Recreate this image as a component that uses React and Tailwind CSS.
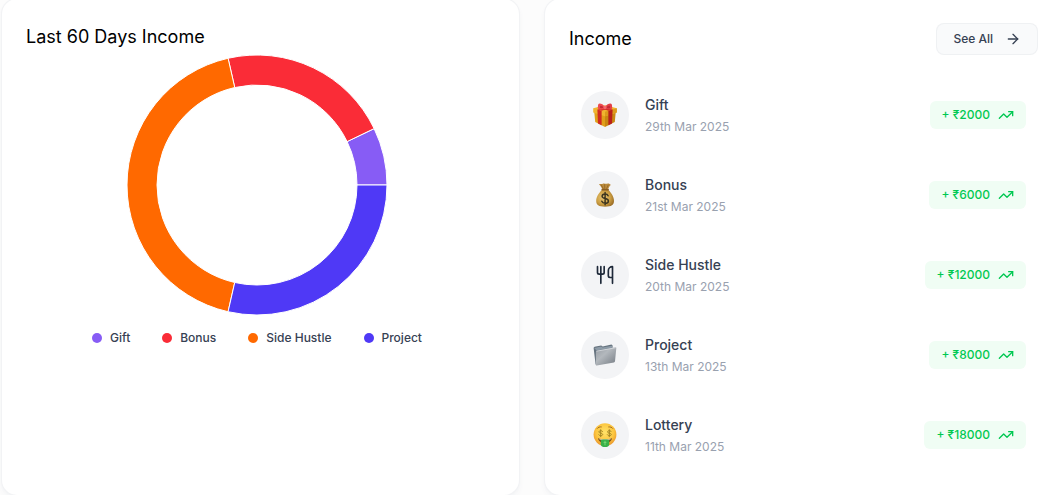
import React from "react";
import { ArrowRight, TrendingUp, Utensils } from "lucide-react";

const SLICES = [
  { name: "Gift", amount: 2000, color: "#875cf5" },
  { name: "Bonus", amount: 6000, color: "#fa2c37" },
  { name: "Side Hustle", amount: 12000, color: "#ff6900" },
  { name: "Project", amount: 8000, color: "#4f39f6" },
];

function GiftIcon() {
  return (
    <svg viewBox="0 0 24 24" className="size-6" aria-hidden="true">
      <path d="M1.200 8.500 12 12v12L2.200 19Z" fill="#e0a01a" />
      <path d="M12 12l10.800-3.500L21.800 19 12 24Z" fill="#c98712" />
      <path d="M.2 5.200 12 2.200l11.800 3v4.400L12 13.200.2 9.600Z" fill="#f0b530" />
      <path d="M12 8.800l11.800-3.600v4.400L12 13.200Z" fill="#dc9a1c" />
      <path d="M4.400 6.500 8.600 7.800v14.500l-3.600-1.900Z" fill="#cf2a22" />
      <path d="m15.400 7.800 4.200-1.300-.6 13.900-3.600 1.900Z" fill="#b8201c" />
      <path d="M4.400 6.500 14.500 3.300l5 1L8.600 7.800Z" fill="#dd362c" />
      <path d="M19.600 6.500 9.500 3.300l-5 1 10.900 3.500Z" fill="#d32d27" />
      <path d="M12 4C9.700.400 6-.200 5.300 1.200c-.6 1.600-.5 4.200.2 4.900 1.300.7 4.600.1 6.500-1.100Z" fill="#ee4a4e" />
      <path d="M12 4c2.300-3.600 6-4.200 6.700-2.800.6 1.600.5 4.200-.2 4.900-1.300.7-4.600.1-6.500-1.100Z" fill="#e33f44" />
      <path d="M7.200 2.700c1.400 0 2.800.7 3.600 1.800-1.300.6-2.700.8-3.800.5Zm9.600 0c-1.400 0-2.800.7-3.600 1.800 1.300.6 2.700.8 3.800.5Z" fill="#c42a34" />
      <rect x="10.500" y="2.700" width="3" height="3.400" rx="1" fill="#f4686c" />
    </svg>
  );
}

function MoneyBagIcon() {
  return (
    <svg viewBox="0 0 24 24" className="size-6" aria-hidden="true">
      <defs>
        <radialGradient id="bag" cx=".4" cy=".45" r=".65">
          <stop offset="0" stopColor="#e6c576" />
          <stop offset=".6" stopColor="#cda044" />
          <stop offset="1" stopColor="#9b6d26" />
        </radialGradient>
      </defs>
      <path d="M6 1.300C7.200.3 8.400 1.500 9.800.8c1.400-.8 2.900.5 4.400-.1 1.300-.5 2.800.3 3.500 1.200-1.500 1.300-2.300 3-2.500 4.800H9.200C8.800 4.500 7.500 2.900 6 1.300Z" fill="#bb8b3c" />
      <path d="M8.200 1.800 10.400 6M11.600 1.300l.2 4.700M15.300 1.800 13.500 6" stroke="#8b5e22" strokeWidth=".7" />
      <path d="M8.900 7h6.500c2.700 2.600 5.600 6.600 5.600 10.800 0 4.400-2.500 5.900-8.900 5.900s-8.900-1.500-8.900-5.900C3.200 13.600 6.200 9.600 8.900 7Z" fill="url(#bag)" />
      <rect x="8.300" y="6" width="7.700" height="1.600" rx=".8" fill="#8a5e22" />
      <path d="M15.100 12.700c-.5-1.200-1.600-1.700-3-1.700-1.800 0-3 .9-3 2.300 0 3.200 6.300 1.400 6.300 4.600 0 1.500-1.400 2.400-3.200 2.400-1.700 0-2.900-.7-3.400-2M12.100 9.500v12.300" fill="none" stroke="#3d3620" strokeWidth="1.500" strokeLinecap="round" />
    </svg>
  );
}

function FolderIcon() {
  return (
    <svg viewBox="0 0 24 24" className="size-6" aria-hidden="true">
      <defs>
        <linearGradient id="folder" x1="0" y1="0" x2="1" y2="1">
          <stop offset="0" stopColor="#979da4" />
          <stop offset=".4" stopColor="#b3b8bd" />
          <stop offset="1" stopColor="#747b83" />
        </linearGradient>
      </defs>
      <path d="M.6 4.800 1.600 3.800l6.600-1.300 1.500.9L18.500 1.600l1.100.9v15L2.600 21.500Z" fill="#65727e" />
      <path d="M1.200 5 8.200 3.600l1.500.9 9.300-1.800v2L3.500 7.600Z" fill="#8d9ba7" />
      <path d="M3.800 7.700 22.300 4.300c.7-.1 1.100.3 1 .9L22 18.300c-.1.600-.5 1-1.100 1.100L3.800 22.600c-.6.100-1-.3-1-.9l.1-12.800c0-.6.300-1.100.9-1.200Z" fill="url(#folder)" />
      <path d="M3.400 8.200 22.700 4.700" stroke="#dfe3e6" strokeWidth=".7" />
    </svg>
  );
}

function MoneyFaceIcon() {
  return (
    <svg viewBox="0 0 24 24" className="size-6" aria-hidden="true">
      <defs>
        <radialGradient id="face" cx=".5" cy=".4" r=".6">
          <stop offset="0" stopColor="#ffe36a" />
          <stop offset=".65" stopColor="#fcc63f" />
          <stop offset="1" stopColor="#ea962c" />
        </radialGradient>
      </defs>
      <circle cx="12" cy="11.600" r="11.400" fill="url(#face)" />
      <path d="M4.300 5.400c.8-1.100 2.400-1.700 4-1.500M15.700 3.900c1.600-.2 3.200.4 4 1.500" stroke="#9a6420" strokeWidth=".9" fill="none" strokeLinecap="round" />
      <g fill="none" stroke="#a08424" strokeWidth="1" strokeLinecap="round">
        <path d="M9.600 8.600c-.4-.7-1.100-.9-1.800-.9-2.500 0-2.400 2.200 0 2.500 2.600.4 2.400 2.500 0 2.500-.9 0-1.600-.3-2-.9M7.700 6.700v7" />
        <path d="M18.200 8.600c-.4-.7-1.100-.9-1.800-.9-2.500 0-2.400 2.200 0 2.500 2.600.4 2.400 2.500 0 2.500-.9 0-1.600-.3-2-.9M16.300 6.700v7" />
      </g>
      <path d="M5 15.200c4.400 1.200 9.600 1.200 14 0-.5 3-3 4.900-7 4.900s-6.500-1.900-7-4.900Z" fill="#7a4c1c" />
      <path d="M6.200 15.500c3.700.9 7.900.9 11.600 0l-.4 1c-3.500.6-7.300.6-10.800 0Z" fill="#f7efd2" />
      <path d="M7.900 17c2.600-.6 5.600-.6 8.200 0l.1 4.400c0 1.600-1.900 2.600-4.200 2.600s-4.200-1-4.200-2.600Z" fill="#38b04a" />
      <path d="M12 17.800v4.500M10.600 19.400h2.800" stroke="#7fd977" strokeWidth=".9" />
    </svg>
  );
}

const INCOME = [
  { name: "Gift", date: "29th Mar 2025", amount: 2000, icon: <GiftIcon /> },
  { name: "Bonus", date: "21st Mar 2025", amount: 6000, icon: <MoneyBagIcon /> },
  { name: "Side Hustle", date: "20th Mar 2025", amount: 12000, icon: <Utensils size={20} aria-hidden="true" /> },
  { name: "Project", date: "13th Mar 2025", amount: 8000, icon: <FolderIcon /> },
  { name: "Lottery", date: "11th Mar 2025", amount: 18000, icon: <MoneyFaceIcon /> },
];

function point(radius, angle) {
  return `${131 + radius * Math.cos(angle)} ${131 - radius * Math.sin(angle)}`;
}

function DonutChart({ slices }) {
  const total = slices.reduce((sum, s) => sum + s.amount, 0);
  let angle = 0;
  return (
    <svg width="262" height="262" viewBox="0 0 262 262" role="img" aria-label="Income by source">
      {slices.map((s) => {
        const start = angle;
        angle += (s.amount / total) * Math.PI * 2;
        return (
          <path
            key={s.name}
            d={`M${point(130, start)}A130 130 0 0 0 ${point(130, angle)}L${point(100, angle)}A100 100 0 0 1 ${point(100, start)}Z`}
            fill={s.color}
            stroke="#fff"
          />
        );
      })}
    </svg>
  );
}

function Card({ children }) {
  return <section className="rounded-2xl border border-gray-200/50 bg-white p-6 shadow-md shadow-gray-100">{children}</section>;
}

export default function App() {
  return (
    <div className="h-screen overflow-hidden bg-[#fcfcfc] font-['Inter',sans-serif]">
      <main className="-mt-[2px] -mr-4 grid grid-cols-2 gap-6 pl-px">
        <Card>
          <h2 className="text-lg text-black">Last 60 Days Income</h2>
          <div className="mt-[3px] flex flex-col items-center pr-[7px]">
            <DonutChart slices={SLICES} />
            <ul className="mt-[14px] flex gap-8">
              {SLICES.map((s) => (
                <li key={s.name} className="flex items-center gap-2 text-xs font-medium text-gray-700">
                  <span className="size-[10px] rounded-full" style={{ backgroundColor: s.color }} />
                  {s.name}
                </li>
              ))}
            </ul>
          </div>
        </Card>
        <Card>
          <div className="flex items-center justify-between">
            <h2 className="text-lg text-black">Income</h2>
            <button
              type="button"
              className="flex h-8 items-center gap-3 rounded-lg border border-gray-200/50 bg-gray-50 px-4 text-xs font-medium text-gray-700"
            >
              See All
              <ArrowRight size={16} aria-hidden="true" />
            </button>
          </div>
          <ul className="mt-6 flex flex-col gap-2">
            {INCOME.map((item) => (
              <li key={item.name} className="flex items-center gap-4 rounded-lg p-3">
                <div className="flex size-12 items-center justify-center rounded-full bg-gray-100 text-gray-800">{item.icon}</div>
                <div className="flex-1">
                  <p className="text-sm font-medium text-gray-700">{item.name}</p>
                  <p className="mt-1 text-xs text-gray-400">{item.date}</p>
                </div>
                <div className="flex items-center gap-2 rounded-md bg-green-50 px-3 py-1.5 text-xs font-medium text-green-500">
                  <span>+ ₹{item.amount}</span>
                  <TrendingUp size={16} aria-hidden="true" />
                </div>
              </li>
            ))}
          </ul>
        </Card>
      </main>
    </div>
  );
}
